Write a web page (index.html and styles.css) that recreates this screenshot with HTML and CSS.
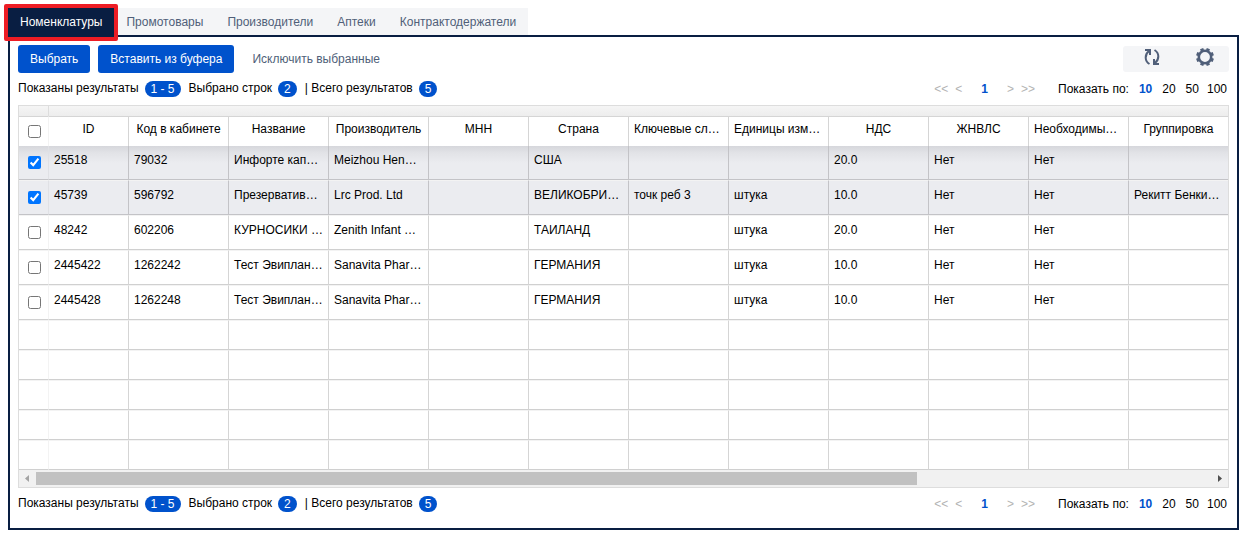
FILE: index.html
```html
<!DOCTYPE html>
<html lang="ru">
<head>
<meta charset="utf-8">
<title>Номенклатуры</title>
<link rel="stylesheet" href="styles.css">
</head>
<body>
<nav class="tabs">
  <button class="tab active" type="button">Номенклатуры</button>
  <button class="tab" type="button">Промотовары</button>
  <button class="tab" type="button">Производители</button>
  <button class="tab" type="button">Аптеки</button>
  <button class="tab" type="button">Контрактодержатели</button>
</nav>
<main class="panel">
  <div class="toolbar">
    <button class="btn" type="button">Выбрать</button>
    <button class="btn" type="button">Вставить из буфера</button>
    <button class="btn plain" type="button">Исключить выбранные</button>
    <div class="tools">
      <button class="tool" type="button" aria-label="Обновить">
        <svg width="18" height="18" viewBox="0 0 18 18" fill="none" stroke="#505f79" stroke-width="2"><path d="M6.500 16C1.500 13 1.500 6.500 6 3"/><path d="M2 2h5v5"/><path d="M11.500 2C16.500 5 16.500 11.500 12 15"/><path d="M16 16h-5v-5"/></svg>
      </button>
      <button class="tool" type="button" aria-label="Настройки">
        <svg width="20" height="20" viewBox="0 0 20 20" fill="none" stroke="#505f79"><circle cx="10" cy="10" r="6.200" stroke-width="2.600"/><path stroke-width="3.400" d="M7.600 4.200L6.600 1.700M12.400 4.200L13.400 1.700M15.800 7.600L18.300 6.600M15.800 12.400L18.300 13.400M12.400 15.800L13.400 18.300M7.600 15.800L6.600 18.300M4.200 12.400L1.700 13.400M4.200 7.600L1.700 6.600"/></svg>
      </button>
    </div>
  </div>
  <div class="status">
    <div class="summary">
      <span>Показаны результаты</span><b class="badge">1 - 5</b>
      <span class="next">Выбрано строк</span><b class="badge">2</b>
      <span class="next">| Всего результатов</span><b class="badge">5</b>
    </div>
    <div class="pager"><a href="#">&lt;&lt;</a><a href="#">&lt;</a><a href="#" class="current">1</a><a href="#">&gt;</a><a href="#">&gt;&gt;</a></div>
    <div class="sizes"><span>Показать по:</span><a href="#" class="current">10</a><a href="#">20</a><a href="#">50</a><a href="#">100</a></div>
  </div>
  <div class="grid">
    <table>
      <colgroup><col class="c-check"><col class="c-id"><col class="c"><col class="c"><col class="c"><col class="c"><col class="c"><col class="c"><col class="c"><col class="c"><col class="c"><col class="c"><col></colgroup>
      <thead>
        <tr class="strip"><td></td><td colspan="12"></td></tr>
        <tr class="head"><th><input type="checkbox" aria-label="Выбрать все"></th><th>ID</th><th>Код в кабинете</th><th>Название</th><th>Производитель</th><th>МНН</th><th>Страна</th><th class="cut">Ключевые сл…</th><th class="cut">Единицы изм…</th><th>НДС</th><th>ЖНВЛС</th><th class="cut">Необходимы…</th><th>Группировка</th></tr>
      </thead>
      <tbody>
        <tr class="selected first"><td><input type="checkbox" aria-label="25518" checked></td><td>25518</td><td>79032</td><td>Инфорте кап…</td><td>Meizhou Hen…</td><td></td><td>США</td><td></td><td></td><td>20.0</td><td>Нет</td><td>Нет</td><td></td></tr>
        <tr class="selected"><td><input type="checkbox" aria-label="45739" checked></td><td>45739</td><td>596792</td><td>Презерватив…</td><td>Lrc Prod. Ltd</td><td></td><td>ВЕЛИКОБРИ…</td><td>точк реб 3</td><td>штука</td><td>10.0</td><td>Нет</td><td>Нет</td><td>Рекитт Бенки…</td></tr>
        <tr><td><input type="checkbox" aria-label="48242"></td><td>48242</td><td>602206</td><td>КУРНОСИКИ …</td><td>Zenith Infant …</td><td></td><td>ТАИЛАНД</td><td></td><td>штука</td><td>20.0</td><td>Нет</td><td>Нет</td><td></td></tr>
        <tr><td><input type="checkbox" aria-label="2445422"></td><td>2445422</td><td>1262242</td><td>Тест Эвиплан…</td><td>Sanavita Phar…</td><td></td><td>ГЕРМАНИЯ</td><td></td><td>штука</td><td>10.0</td><td>Нет</td><td>Нет</td><td></td></tr>
        <tr><td><input type="checkbox" aria-label="2445428"></td><td>2445428</td><td>1262248</td><td>Тест Эвиплан…</td><td>Sanavita Phar…</td><td></td><td>ГЕРМАНИЯ</td><td></td><td>штука</td><td>10.0</td><td>Нет</td><td>Нет</td><td></td></tr>
        <tr class="empty"><td></td><td></td><td></td><td></td><td></td><td></td><td></td><td></td><td></td><td></td><td></td><td></td><td></td></tr>
        <tr class="empty"><td></td><td></td><td></td><td></td><td></td><td></td><td></td><td></td><td></td><td></td><td></td><td></td><td></td></tr>
        <tr class="empty"><td></td><td></td><td></td><td></td><td></td><td></td><td></td><td></td><td></td><td></td><td></td><td></td><td></td></tr>
        <tr class="empty"><td></td><td></td><td></td><td></td><td></td><td></td><td></td><td></td><td></td><td></td><td></td><td></td><td></td></tr>
        <tr class="empty"><td></td><td></td><td></td><td></td><td></td><td></td><td></td><td></td><td></td><td></td><td></td><td></td><td></td></tr>
      </tbody>
    </table>
    <div class="scrollbar">
      <svg class="arrow" width="17" height="13" viewBox="0 0 17 13"><path d="M10 3v7L6 6.500z" fill="#a3a3a3"/></svg>
      <div class="track"><div class="thumb"></div></div>
      <svg class="arrow" width="17" height="13" viewBox="0 0 17 13"><path d="M7 3v7l4-3.500z" fill="#505050"/></svg>
    </div>
  </div>
  <div class="status">
    <div class="summary">
      <span>Показаны результаты</span><b class="badge">1 - 5</b>
      <span class="next">Выбрано строк</span><b class="badge">2</b>
      <span class="next">| Всего результатов</span><b class="badge">5</b>
    </div>
    <div class="pager"><a href="#">&lt;&lt;</a><a href="#">&lt;</a><a href="#" class="current">1</a><a href="#">&gt;</a><a href="#">&gt;&gt;</a></div>
    <div class="sizes"><span>Показать по:</span><a href="#" class="current">10</a><a href="#">20</a><a href="#">50</a><a href="#">100</a></div>
  </div>
</main>
</body>
</html>
```
FILE: styles.css
```css
* { box-sizing: border-box; }
body {
  margin: 0;
  padding: 8px 3px 3px 8px;
  background: #fff;
  color: #000;
  font: 12px/16px "Liberation Sans", Arial, sans-serif;
}
button { font: inherit; border: 0; margin: 0; cursor: pointer; }
a { color: inherit; text-decoration: none; }

.tabs { display: flex; height: 27px; }
.tab { padding: 0 12px; background: #f4f5f7; color: #505f79; }
.tab.active {
  background: #091e42;
  color: #fff;
  position: relative;
  z-index: 1;
}
.tab.active::after {
  content: "";
  position: absolute;
  inset: -4px -4px -6px;
  border: 4px solid #ed1c24;
  border-radius: 2px;
}

.panel { border: 2px solid #091e42; padding: 8px; }

.toolbar { display: flex; gap: 8px; align-items: center; height: 28px; }
.btn { height: 28px; padding: 0 12px; border-radius: 3px; background: #0052cc; color: #fff; }
.btn.plain { background: none; color: #505f79; padding: 0 10px; }
.tools {
  display: flex;
  margin-left: auto;
  width: 106px;
  height: 26px;
  border-radius: 3px;
  background: #f4f5f7;
}
.tool {
  flex: 1;
  padding: 0 0 4px 5px;
  background: none;
  display: flex;
  align-items: center;
  justify-content: center;
}

.status { display: flex; align-items: center; height: 32px; padding-right: 2px; }
.summary { display: flex; align-items: center; flex: 1; }
.summary span { padding-bottom: 2px; }
.next { margin-left: 8px; }
.badge {
  margin-left: 6px;
  padding: 0 6px;
  border-radius: 8px;
  background: #0052cc;
  color: #fff;
  font-weight: normal;
}
.pager, .sizes { display: flex; }
.pager { color: #b3b3b3; gap: 7px; }
.pager .current { margin: 0 12px; }
.sizes { gap: 10px; margin-left: 23px; }
.sizes a:last-child { margin-left: -2px; }
.current { color: #0052cc; font-weight: bold; }

.grid { border: 1px solid #ddd; overflow: hidden; }
table { width: 100%; table-layout: fixed; border-collapse: separate; border-spacing: 0; }
.c-check { width: 30px; }
.c-id { width: 80px; }
.c { width: 100px; }
th, td {
  padding: 0 5px;
  border-right: 1px solid #d5d5d5;
  vertical-align: top;
  white-space: nowrap;
  overflow: hidden;
  font-weight: normal;
}
th.cut { text-align: left; }
th:first-child, td:first-child { padding: 0 0 0 9px; border-right-color: #f3f3f3; text-align: left; }
th:last-child, td:last-child { border-right: 0; }
.strip td { height: 10px; background: linear-gradient(#f5f5f5, #ededed); }
.strip td:first-child { border-right-color: #ddd; }
.head th { height: 30px; padding-top: 4px; border-top: 1px solid #d5d5d5; }
tbody td {
  height: 35px;
  padding-top: 6px;
  border-top: 1px solid #f3f3f3;
  border-bottom: 1px solid #d0d0d0;
}
.selected td { background: #ebecf0; border-right-color: #c3c3c7; border-bottom-color: #c3c3c7; }
.selected td:first-child { border-right-color: #e0e1e5; }
.first td { height: 34px; border-top: 0; background: linear-gradient(#d6d7dc, #e2e3e7 7px, #ebecf0 17px); }
.empty td { height: 30px; padding: 0; }
input[type="checkbox"] { display: block; width: 13px; height: 13px; margin: 4px 0 0; }
tbody tr:not(.empty) td:first-child { vertical-align: bottom; padding-bottom: 10px; }

.scrollbar { display: flex; align-items: center; height: 17px; background: #f1f1f1; }
.track { flex: 1; }
.thumb { width: 75%; height: 13px; background: #c1c1c1; }
```
